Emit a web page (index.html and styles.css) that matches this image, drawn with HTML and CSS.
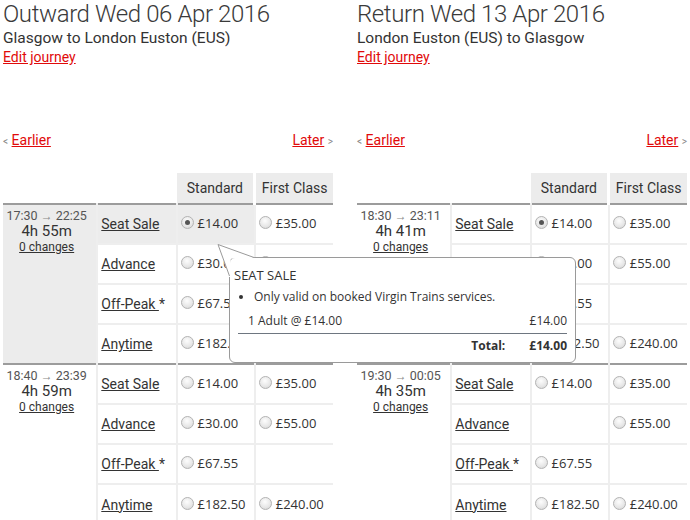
FILE: index.html
```html
<!DOCTYPE html>
<html lang="en">
<head>
    <meta charset="UTF-8">
    <title>Choose your tickets</title>
    <link rel="stylesheet" href="styles.css">
</head>
<body>
<div class="page">

    <!-- Outward journey -->
    <section class="journey">
        <h1>Outward Wed 06 Apr 2016</h1>
        <p class="route">Glasgow to London Euston (EUS)</p>
        <a href="#" class="edit-link">Edit journey</a>

        <div class="pager">
            <span><span class="chev">&lt;</span> <a href="#">Earlier</a></span>
            <span><a href="#">Later</a> <span class="chev">&gt;</span></span>
        </div>

        <table class="fares">
            <colgroup>
                <col class="col-time"><col class="col-type"><col class="col-price"><col class="col-price">
            </colgroup>
            <thead>
                <tr>
                    <th></th>
                    <th></th>
                    <th class="class-head">Standard</th>
                    <th class="class-head first">First Class</th>
                </tr>
            </thead>
            <tbody class="selected">
                <tr>
                    <td rowspan="4" class="time">
                        <div class="times">17:30 <span class="arrow">&rarr;</span> 22:25</div>
                        <div class="duration">4h 55m</div>
                        <a href="#" class="changes">0 changes</a>
                    </td>
                    <td class="type picked"><a href="#">Seat Sale</a></td>
                    <td class="price picked"><span class="radio on"></span>£14.00</td>
                    <td class="price"><span class="radio"></span>£35.00</td>
                </tr>
                <tr>
                    <td class="type"><a href="#">Advance</a></td>
                    <td class="price"><span class="radio"></span>£30.00</td>
                    <td class="price"><span class="radio"></span>£55.00</td>
                </tr>
                <tr>
                    <td class="type"><a href="#">Off-Peak </a>*</td>
                    <td class="price"><span class="radio"></span>£67.55</td>
                    <td class="price"></td>
                </tr>
                <tr>
                    <td class="type"><a href="#">Anytime</a></td>
                    <td class="price"><span class="radio"></span>£182.50</td>
                    <td class="price"><span class="radio"></span>£240.00</td>
                </tr>
            </tbody>
            <tbody>
                <tr>
                    <td rowspan="4" class="time">
                        <div class="times">18:40 <span class="arrow">&rarr;</span> 23:39</div>
                        <div class="duration">4h 59m</div>
                        <a href="#" class="changes">0 changes</a>
                    </td>
                    <td class="type"><a href="#">Seat Sale</a></td>
                    <td class="price"><span class="radio"></span>£14.00</td>
                    <td class="price"><span class="radio"></span>£35.00</td>
                </tr>
                <tr>
                    <td class="type"><a href="#">Advance</a></td>
                    <td class="price"><span class="radio"></span>£30.00</td>
                    <td class="price"><span class="radio"></span>£55.00</td>
                </tr>
                <tr>
                    <td class="type"><a href="#">Off-Peak </a>*</td>
                    <td class="price"><span class="radio"></span>£67.55</td>
                    <td class="price"></td>
                </tr>
                <tr>
                    <td class="type"><a href="#">Anytime</a></td>
                    <td class="price"><span class="radio"></span>£182.50</td>
                    <td class="price"><span class="radio"></span>£240.00</td>
                </tr>
            </tbody>
        </table>
    </section>

    <!-- Return journey -->
    <section class="journey">
        <h1>Return Wed 13 Apr 2016</h1>
        <p class="route">London Euston (EUS) to Glasgow</p>
        <a href="#" class="edit-link">Edit journey</a>

        <div class="pager">
            <span><span class="chev">&lt;</span> <a href="#">Earlier</a></span>
            <span><a href="#">Later</a> <span class="chev">&gt;</span></span>
        </div>

        <table class="fares">
            <colgroup>
                <col class="col-time"><col class="col-type"><col class="col-price"><col class="col-price">
            </colgroup>
            <thead>
                <tr>
                    <th></th>
                    <th></th>
                    <th class="class-head">Standard</th>
                    <th class="class-head first">First Class</th>
                </tr>
            </thead>
            <tbody>
                <tr>
                    <td rowspan="4" class="time">
                        <div class="times">18:30 <span class="arrow">&rarr;</span> 23:11</div>
                        <div class="duration">4h 41m</div>
                        <a href="#" class="changes">0 changes</a>
                    </td>
                    <td class="type"><a href="#">Seat Sale</a></td>
                    <td class="price"><span class="radio on"></span>£14.00</td>
                    <td class="price"><span class="radio"></span>£35.00</td>
                </tr>
                <tr>
                    <td class="type"><a href="#">Advance</a></td>
                    <td class="price"><span class="radio"></span>£30.00</td>
                    <td class="price"><span class="radio"></span>£55.00</td>
                </tr>
                <tr>
                    <td class="type"><a href="#">Off-Peak </a>*</td>
                    <td class="price"><span class="radio"></span>£67.55</td>
                    <td class="price"></td>
                </tr>
                <tr>
                    <td class="type"><a href="#">Anytime</a></td>
                    <td class="price"><span class="radio"></span>£182.50</td>
                    <td class="price"><span class="radio"></span>£240.00</td>
                </tr>
            </tbody>
            <tbody>
                <tr>
                    <td rowspan="4" class="time">
                        <div class="times">19:30 <span class="arrow">&rarr;</span> 00:05</div>
                        <div class="duration">4h 35m</div>
                        <a href="#" class="changes">0 changes</a>
                    </td>
                    <td class="type"><a href="#">Seat Sale</a></td>
                    <td class="price"><span class="radio"></span>£14.00</td>
                    <td class="price"><span class="radio"></span>£35.00</td>
                </tr>
                <tr>
                    <td class="type"><a href="#">Advance</a></td>
                    <td class="price"></td>
                    <td class="price"><span class="radio"></span>£55.00</td>
                </tr>
                <tr>
                    <td class="type"><a href="#">Off-Peak </a>*</td>
                    <td class="price"><span class="radio"></span>£67.55</td>
                    <td class="price"></td>
                </tr>
                <tr>
                    <td class="type"><a href="#">Anytime</a></td>
                    <td class="price"><span class="radio"></span>£182.50</td>
                    <td class="price"><span class="radio"></span>£240.00</td>
                </tr>
            </tbody>
        </table>
    </section>

    <!-- Fare tooltip for the selected seat sale -->
    <div class="fare-tip">
        <svg class="tip-tail" width="40" height="36" viewBox="0 0 40 36">
            <polygon points="39,15.6 1,1.5 12.2,34 13.6,34 13.6,15.6" fill="#fff"/>
            <polyline points="37,14.5 1,1.5 12.5,33" fill="none" stroke="#9a9a9a" stroke-width="1"/>
        </svg>
        <div class="tip-title">SEAT SALE</div>
        <ul class="tip-notes">
            <li>Only valid on booked Virgin Trains services.</li>
        </ul>
        <div class="tip-line">
            <span>1 Adult @ £14.00</span>
            <span>£14.00</span>
        </div>
        <div class="tip-total">
            <span>Total:</span>
            <span class="sum">£14.00</span>
        </div>
    </div>

</div>
</body>
</html>
```

FILE: styles.css
```css
/* General Styles */
body {
    margin: 0;
    font-family: 'Roboto', 'Open Sans', sans-serif;
    color: #333;
    background-color: #fff;
}

a {
    color: #333;
}

.page {
    position: relative;
    display: grid;
    grid-template-columns: 330px 330px;
    column-gap: 24px;
    padding: 0 3px;
}

/* Journey heading */
h1 {
    margin: 0;
    font-size: 24px;
    font-weight: 300;
    line-height: 28px;
    letter-spacing: -0.4px;
    color: #3a3a3a;
}

.route {
    margin: 0;
    font-size: 15.5px;
    line-height: 20px;
}

.edit-link {
    display: block;
    width: fit-content;
    font-size: 14px;
    line-height: 18px;
    color: #e10a0a;
}

.pager {
    display: flex;
    justify-content: space-between;
    height: 18px;
    margin-top: 65px;
    font-size: 14px;
    line-height: 18px;
}

.pager a {
    color: #e10a0a;
}

.chev {
    font-size: 10px;
    color: #888;
}

/* Fares table */
.fares {
    width: 330px;
    margin-top: 24px;
    border-collapse: collapse;
    table-layout: fixed;
}

.col-time {
    width: 94px;
}

.col-type {
    width: 79px;
}

.col-price {
    width: 78px;
}

thead tr {
    height: 31px;
}

.class-head {
    padding: 0;
    background-color: #ececec;
    font-size: 14px;
    font-weight: normal;
    line-height: 18px;
    text-align: center;
}

.class-head.first {
    border-left: 3px solid #fff;
}

tbody {
    border-top: 2px solid #9c9c9c;
}

tbody tr {
    height: 40px;
}

td {
    padding: 0;
}

.time {
    vertical-align: top;
    text-align: center;
    padding: 3px 6px 0 0;
    line-height: 13px;
}

.times {
    font-size: 12.5px;
    line-height: 15px;
    color: #555;
}

.arrow {
    font-size: 12px;
    color: #888;
}

.duration {
    font-size: 15px;
    line-height: 15px;
}

.changes {
    display: inline-block;
    font-size: 12px;
    line-height: 13px;
}

.type,
.price {
    border-left: 2px solid #eee;
    border-top: 2px solid #eee;
    vertical-align: middle;
}

tbody tr:first-child .type,
tbody tr:first-child .price {
    border-top: none;
}

.type {
    padding-left: 3px;
    font-size: 14px;
}

.price {
    padding: 0 0 2px 3px;
    font-family: 'Open Sans', sans-serif;
    font-size: 13px;
    white-space: nowrap;
}

.selected .time,
.picked {
    background-color: #ececec;
}

/* Radio buttons */
.radio {
    display: inline-block;
    position: relative;
    width: 11px;
    height: 11px;
    margin-right: 4px;
    vertical-align: -1px;
    border: 1px solid #b4b4b4;
    border-radius: 50%;
    background: radial-gradient(circle at 45% 35%, #fdfdfd 0%, #e6e6e6 60%, #cfcfcf 100%);
}

.radio.on::after {
    content: "";
    position: absolute;
    left: 3px;
    top: 3px;
    width: 5px;
    height: 5px;
    border-radius: 50%;
    background-color: #555;
}

/* Tooltip */
.fare-tip {
    position: absolute;
    left: 229px;
    top: 257px;
    width: 347px;
    height: 106px;
    box-sizing: border-box;
    padding: 9px 8px 0 8px;
    background-color: #fff;
    border: 1px solid #9a9a9a;
    border-radius: 6px;
    font-family: 'Open Sans', sans-serif;
    font-size: 12px;
    color: #333;
    z-index: 2;
}

.tip-tail {
    position: absolute;
    left: -13px;
    top: -15px;
}

.tip-title {
    position: relative;
    margin-left: -4px;
    font-size: 13px;
    line-height: 16px;
}

.tip-notes {
    margin: 6px 0 0 0;
    padding-left: 16px;
    line-height: 16px;
}

.tip-line {
    display: flex;
    justify-content: space-between;
    margin-top: 7px;
    padding: 0 0 4px 10px;
    line-height: 17px;
    border-bottom: 1px solid #6e7680;
}

.tip-total {
    display: flex;
    justify-content: flex-end;
    gap: 24px;
    margin-top: 3px;
    font-weight: bold;
    line-height: 17px;
}
```
